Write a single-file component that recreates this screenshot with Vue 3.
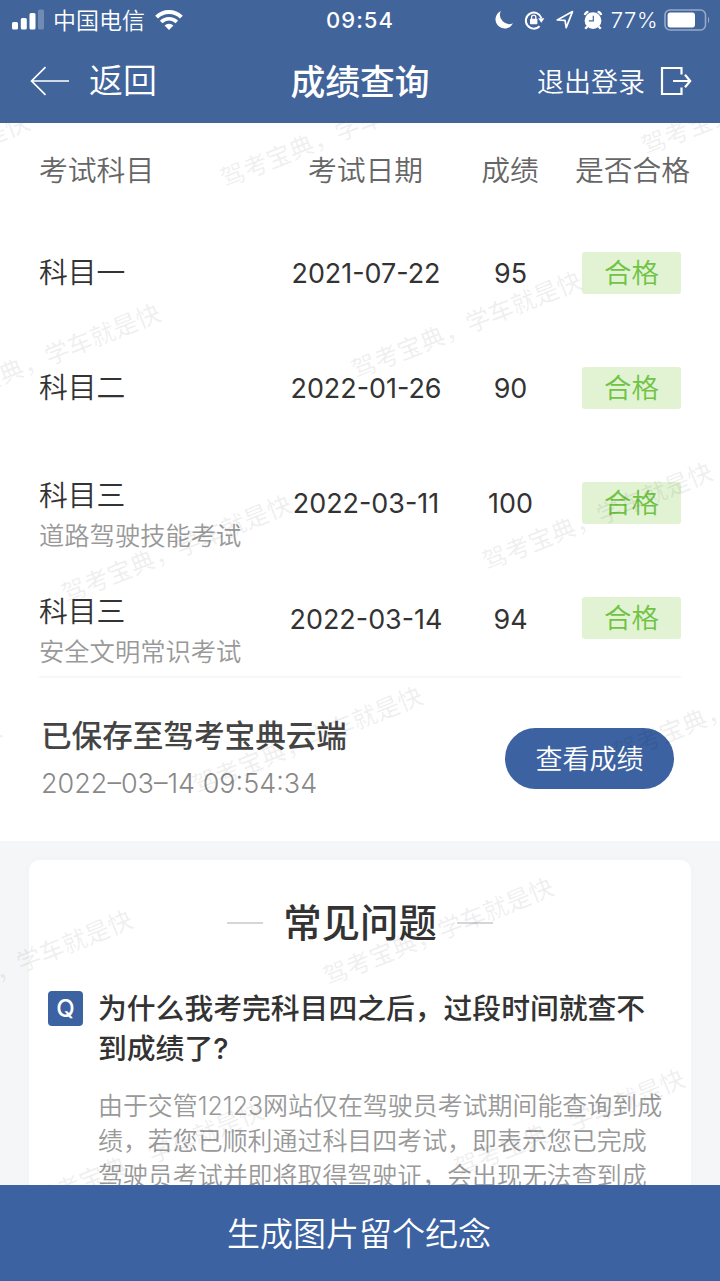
<script setup>
const records = [
  { subject: '科目一', note: '', date: '2021-07-22', score: '95' },
  { subject: '科目二', note: '', date: '2022-01-26', score: '90' },
  { subject: '科目三', note: '道路驾驶技能考试', date: '2022-03-11', score: '100' },
  { subject: '科目三', note: '安全文明常识考试', date: '2022-03-14', score: '94' },
]
const answer = [
  '由于交管12123网站仅在驾驶员考试期间能查询到成',
  '绩，若您已顺利通过科目四考试，即表示您已完成',
  '驾驶员考试并即将取得驾驶证，会出现无法查到成',
]
// centre of the first glyph of every watermark line
const marks = []
for (let i = 0; i < 7; i++) {
  for (let j = -1; j < 3; j++) {
    const x = 233 + 131 * i - 421 * j
    const y = 176 + 191.4 * i + 32.5 * j
    if (x > -230 && x < 725 && y > 130 && y < 1270) marks.push({ x, y })
  }
}
</script>

<template>
  <div class="page">
    <header class="top">
      <div class="status">
        <div class="status-side">
          <svg class="signal" width="33" height="22" viewBox="0 0 33 22">
            <rect x="0" y="13" width="6" height="7.5" rx="1.5" fill="#fff" />
            <rect x="8.8" y="9" width="6" height="11.5" rx="1.5" fill="#fff" />
            <rect x="17.5" y="4" width="6" height="16.5" rx="1.5" fill="#fff" />
            <rect x="26" y="0.5" width="6" height="20" rx="1.5" fill="#fff" opacity=".25" />
          </svg>
          <span class="carrier">中国电信</span>
          <svg class="wifi" width="28" height="22" viewBox="0 0 28 22" fill="none" stroke="#fff" stroke-width="4">
            <path d="M1.6 8.2 A17.5 17.5 0 0 1 26.4 8.2" />
            <path d="M6.2 13 A11 11 0 0 1 21.8 13" stroke-width="3.6" />
            <path d="M14 21 L9.6 16.6 A6.2 6.2 0 0 1 18.4 16.6 Z" fill="#fff" stroke="none" />
          </svg>
        </div>
        <span class="clock">09:54</span>
        <div class="status-side right">
          <svg width="20" height="20" viewBox="0 0 20 20"><path d="M6.8 1 A9.2 9.2 0 1 0 19 13.3 A9.3 9.3 0 0 1 6.8 1Z" fill="#fff" /></svg>
          <svg class="lock" width="21" height="20" viewBox="0 0 21 20" fill="none" stroke="#fff">
            <path d="M15.6 16.2 A8 8 0 1 1 17.4 8" stroke-width="2" />
            <path d="M14.2 8.2h6.2l-3.1 4.6z" fill="#fff" stroke="none" />
            <rect x="6" y="8.7" width="7.4" height="5.6" rx=".7" fill="#fff" stroke="none" />
            <path d="M7.6 9V7.3a2.1 2.1 0 0 1 4.2 0V9" stroke-width="1.3" />
          </svg>
          <svg class="nav" width="18" height="19" viewBox="0 0 18 19"><path d="M1.3 10 L16.5 1.6 L10.2 17.6 L9 10.4 Z" fill="none" stroke="#fff" stroke-width="1.7" stroke-linejoin="round" /></svg>
          <svg class="alarm" width="20" height="20" viewBox="0 0 20 20">
            <circle cx="10" cy="10.6" r="8.4" fill="#fff" />
            <path d="M1.8 5 A4 4 0 0 1 5.4 1.8 M14.6 1.8 A4 4 0 0 1 18.2 5 M4.4 16.5 L2.2 18.8 M15.6 16.5 L17.8 18.8" fill="none" stroke="#fff" stroke-width="2.3" />
            <path d="M10.3 5.8 V10.8 H5.8" fill="none" stroke="#41649b" stroke-width="1.2" />
          </svg>
          <span class="percent">77%</span>
          <svg class="battery" width="48" height="22" viewBox="0 0 48 22">
            <rect x="1" y="1" width="40.5" height="20" rx="5" fill="none" stroke="#fff" stroke-opacity=".45" stroke-width="1.6" />
            <rect x="3.6" y="3.6" width="27.4" height="14.8" rx="2.6" fill="#fff" />
            <path d="M44 7.5 Q46.5 11 44 14.5Z" fill="#fff" opacity=".45" />
          </svg>
        </div>
      </div>
      <div class="bar">
        <div class="back">
          <svg width="40" height="30" viewBox="0 0 40 30" fill="none" stroke="#fff" stroke-width="1.7"><path d="M15.5 1.2 L1.6 15 L15.5 28.8 M1.6 15 H39" /></svg>
          <span>返回</span>
        </div>
        <h1>成绩查询</h1>
        <div class="logout">
          <span>退出登录</span>
          <svg width="32" height="30" viewBox="0 0 32 30" fill="none" stroke="#fff" stroke-width="2.2"><path d="M21.5 8.5 V2 H2 V28 H21.5 V21.5 M13 15 H30 M25 8.8 L30.2 15 L25 21.2" /></svg>
        </div>
      </div>
    </header>

    <main>
      <section class="results">
        <div class="row head">
          <span>考试科目</span><span class="c">考试日期</span><span class="c">成绩</span><span class="c wide">是否合格</span>
        </div>
        <div v-for="r in records" :key="r.date" class="row">
          <div class="subject" :class="{ noted: r.note }">
            <div class="name">{{ r.subject }}</div>
            <div v-if="r.note" class="note">{{ r.note }}</div>
          </div>
          <span class="c num">{{ r.date }}</span>
          <span class="c num">{{ r.score }}</span>
          <span class="badge">合格</span>
        </div>
        <div class="saved">
          <div>
            <div class="saved-title">已保存至驾考宝典云端</div>
            <div class="saved-time">2022–03–14 09:54:34</div>
          </div>
          <button class="view">查看成绩</button>
        </div>
      </section>

      <section class="faq">
        <h2><i></i><span>常见问题</span><i></i></h2>
        <div class="question">
          <b class="q">Q</b>
          <div class="question-text">为什么我考完科目四之后，过段时间就查不<br>到成绩了?</div>
        </div>
        <div class="answer">
          <div v-for="line in answer" :key="line">{{ line }}</div>
        </div>
      </section>

      <svg class="watermark" width="720" height="1062" viewBox="0 123 720 1062">
        <text v-for="(m, i) in marks" :key="i" :transform="`translate(${m.x} ${m.y}) rotate(-22)`" x="-12" y="8">驾考宝典，学车就是快</text>
      </svg>
    </main>

    <footer>生成图片留个纪念</footer>
  </div>
</template>

<style>
body { margin: 0; }
</style>

<style scoped>
.page {
  width: 720px;
  height: 1281px;
  overflow: hidden;
  display: flex;
  flex-direction: column;
  font-family: Inter, "Noto Sans CJK SC", sans-serif;
  font-weight: 350;
  color: #333;
  background: #f4f6f7;
  white-space: nowrap;
}
.top { height: 123px; flex: none; background: #41649b; color: #fff; }
.status { height: 39px; display: grid; grid-template-columns: 1fr auto 1fr; align-items: center; }
.status-side { display: flex; align-items: center; padding-left: 12px; }
.status-side svg { flex: none; }
.right { justify-content: flex-end; padding: 0 8px 0 0; }
.carrier { font-size: 23px; line-height: 34px; margin-left: 8px; margin-top: -2px; font-family: "Noto Sans CJK SC", sans-serif; }
.wifi { margin-left: 10px; }
.clock { font-size: 22px; font-weight: 500; letter-spacing: 1px; padding-top: 1px; }
.lock { margin-left: 10px; }
.nav { margin-left: 11px; }
.alarm { margin-left: 9px; }
.percent { font-size: 22px; margin-left: 8px; letter-spacing: .5px; padding-top: 1px; }
.battery { margin-left: 6px; }
.bar { height: 84px; display: grid; grid-template-columns: 1fr auto 1fr; align-items: center; box-sizing: border-box; padding: 0 28px 0 30px; }
.back { display: flex; align-items: center; font-size: 34px; gap: 19px; line-height: 48px; }
.back span, .logout span { margin-top: -1px; }
.bar h1 { margin: -2px 0 0 -2px; font-size: 34.8px; font-weight: 500; }
.logout { display: flex; align-items: center; justify-content: flex-end; font-size: 27px; gap: 15px; }
main { position: relative; flex: 1; min-height: 0; overflow: hidden; }
.results { background: #fff; height: 718px; }
.row {
  height: 115.2px;
  display: grid;
  grid-template-columns: 244px 165px 124px 99px;
  padding: 0 39px;
  align-items: center;
  font-size: 28.8px;
}
.badge { margin-left: 10px; margin-right: -10px; }
.head { height: 90px; margin-bottom: 2px; color: #666; }
.c { text-align: center; }
.row .wide { margin-left: -10px; margin-right: -30px; padding-left: 2px; }
.num { font-size: 26.9px; font-weight: 400; padding: 1px 0 0 1px; }
.name { line-height: 40px; padding-top: 1px; }
.noted { padding-top: 26px; }
.note { font-size: 25.3px; line-height: 40px; color: #999; }
.badge { height: 42px; line-height: 42px; border-radius: 3px; background: #e1f3d3; color: #70c344; text-align: center; font-size: 27.5px; }
.saved { border-top: 2px solid #f7f7f7; margin: 0 39px; height: 163px; box-sizing: border-box; display: flex; align-items: center; justify-content: space-between; padding: 0 7px 0 2px; }
.saved-title { font-size: 30.6px; line-height: 48px; font-weight: 500; color: #444; padding-top: 4px; }
.saved-time { font-size: 27px; line-height: 48px; font-weight: 300; color: #888; }
.view { font: inherit; font-size: 27px; color: #fff; background: #3c62a2; border: 0; width: 169px; height: 61px; border-radius: 31px; padding: 0 0 2px; }
.faq { margin: 19px 29px 0; height: 400px; background: #fff; border-radius: 10px; box-shadow: 0 0 10px rgba(0, 20, 10, .025); padding: 34px 19px 0; }
h2 { margin: 0; display: flex; align-items: center; justify-content: center; gap: 20px; font-size: 38.4px; line-height: 58px; font-weight: 500; }
h2 i { width: 36px; height: 2px; background: #d4d6da; }
.question { display: flex; margin-top: 37px; gap: 15px; }
.q { width: 35px; height: 35px; margin-top: 2px; line-height: 35px; text-align: center; border-radius: 4px; background: #3c62a2; color: #fff; font-size: 24px; font-weight: 500; }
.question-text { font-size: 28.8px; line-height: 40px; font-weight: 500; }
.answer { margin: 20px 0 0 50px; font-size: 24.95px; line-height: 35px; color: #999; font-weight: 350; }
.watermark { position: absolute; left: 0; top: 0; pointer-events: none; }
.watermark text { font-size: 24.6px; fill: #000; fill-opacity: .06; font-family: "Noto Sans CJK SC", sans-serif; font-weight: 500; }
footer { height: 96px; padding: 0 2px 2px 0; box-sizing: border-box; flex: none; background: #3c62a2; color: #fff; display: flex; align-items: center; justify-content: center; font-size: 33px; }
</style>
